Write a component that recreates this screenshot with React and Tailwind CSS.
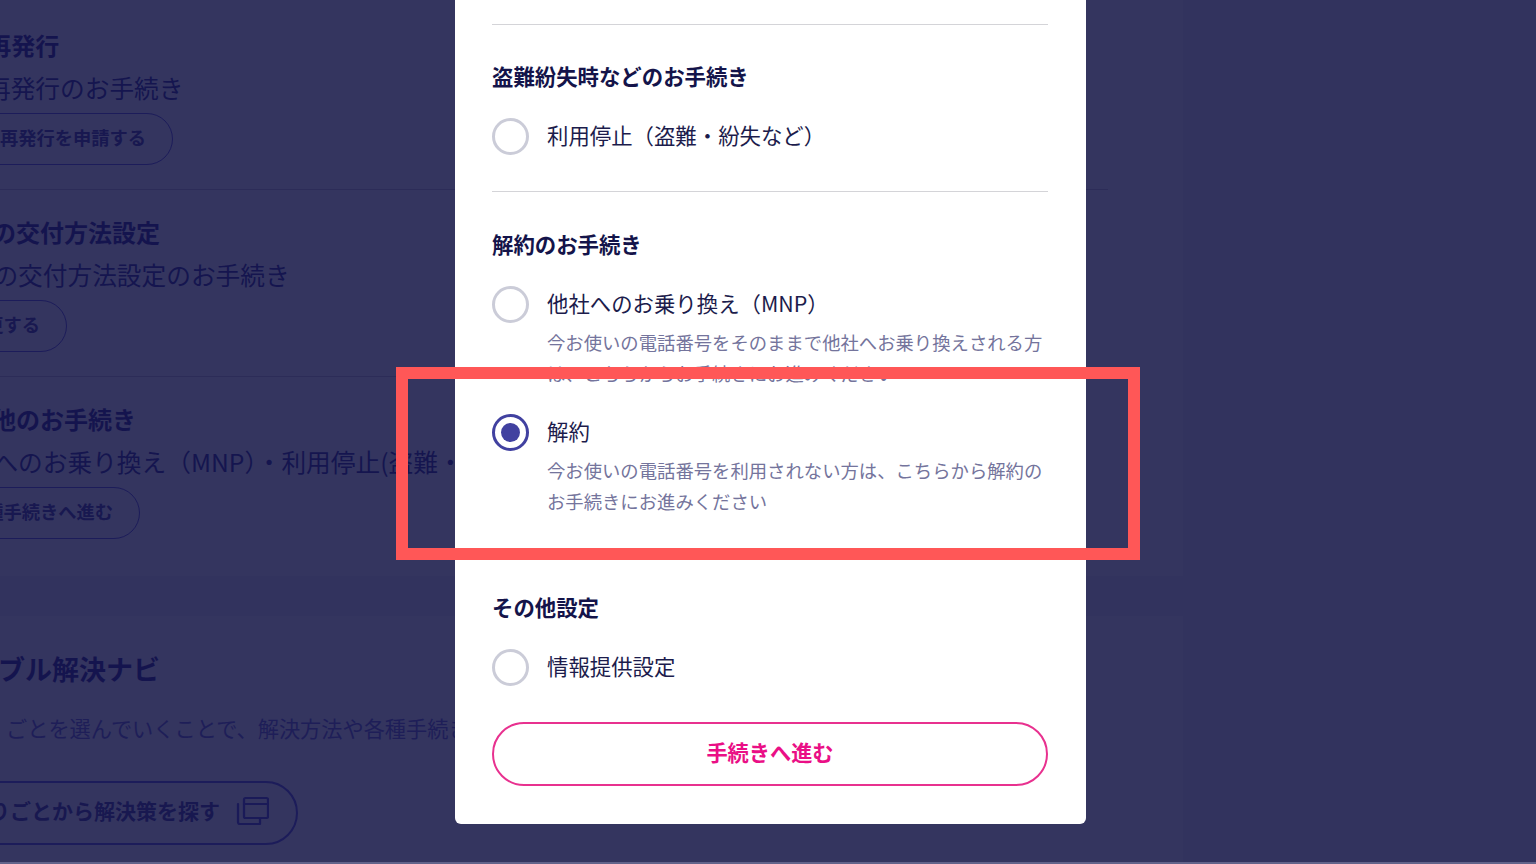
import React from "react";

const FONT = { fontFamily: '"Noto Sans CJK JP", "Noto Sans", sans-serif' };

const settings = [
  {
    title: "SIM再発行",
    text: "SIM再発行のお手続き",
    action: "SIM再発行を申請する",
  },
  {
    title: "書面の交付方法設定",
    text: "書面の交付方法設定のお手続き",
    action: "変更する",
  },
  {
    title: "その他のお手続き",
    text: "他社へのお乗り換え（MNP）・利用停止(盗難・紛失など)・解約のお手続き",
    action: "各種手続きへ進む",
  },
];

const WindowsIcon = () => (
  <svg width="33" height="30" viewBox="0 0 33 30" fill="none" stroke="#1a1a58" strokeWidth="2.2" strokeLinejoin="round" strokeLinecap="round">
    <rect x="8" y="2" width="24" height="20" rx="1.5" />
    <path d="M8 8h24" />
    <path d="M2 8v18a2 2 0 0 0 2 2h20v-5" />
  </svg>
);

const SettingRow = ({ item, last }) => (
  <div className={last ? "pt-[24px] pb-[37px]" : "pt-[24px] pb-[24px] border-b border-[#2c2c58]"}>
    <h3 className="text-[24px] leading-[36px] font-bold text-[#14144e] whitespace-nowrap">{item.title}</h3>
    <p className="mt-[6px] text-[24.7px] leading-[36px] text-[#15154f] whitespace-nowrap">{item.text}</p>
    <button className="mt-[8px] flex h-[52px] items-center rounded-full border border-[#1c1c5a] pl-[22px] pr-[26px] pb-[2px] text-[18.25px] font-bold text-[#181850] whitespace-nowrap">
      {item.action}
    </button>
  </div>
);

const Radio = ({ checked }) => (
  <span
    className={`flex h-[37px] w-[37px] shrink-0 items-center justify-center rounded-full border-[3px] bg-white ${
      checked ? "border-[#4141a0]" : "border-[#cbccd8]"
    }`}
  >
    {checked && <span className="h-[19px] w-[19px] rounded-full bg-[#4141a0]" />}
  </span>
);

const Option = ({ label, desc, checked }) => (
  <div className="flex gap-[18px]">
    <Radio checked={checked} />
    <div className="min-w-0">
      <div className="text-[21.4px] leading-[33px] text-[#1c1c4c]">{label}</div>
      {desc && <p className="mt-[8px] text-[18.35px] leading-[31px] text-[#74749c]">{desc}</p>}
    </div>
  </div>
);

const SectionTitle = ({ children, className }) => (
  <h4 className={`text-[21.4px] leading-[30px] font-bold text-[#14144a] ${className}`}>{children}</h4>
);

export default function App() {
  return (
    <div style={FONT} className="relative h-screen w-screen overflow-hidden bg-[#32335e] border-b-2 border-[#62638a]">
      {/* dimmed page behind the dialog */}
      <main className="-ml-[131px] w-[1314px]">
        <section className="bg-[#34355f] px-[75px] pt-[3px]">
          {settings.map((item, i) => (
            <SettingRow key={item.title} item={item} last={i === settings.length - 1} />
          ))}
        </section>
        <section className="mt-[40px] h-[300px] bg-[#34355f] px-[75px] pt-[33px]">
          <h3 className="text-[27px] leading-[40px] font-bold text-[#14144e] whitespace-nowrap">トラブル解決ナビ</h3>
          <p className="mt-[21px] ml-[62px] text-[21.2px] leading-[36px] text-[#1e1e58] whitespace-nowrap">
            ごとを選んでいくことで、解決方法や各種手続きをご案内します
          </p>
          <button className="mt-[35px] flex h-[64px] items-center gap-[16px] rounded-full border-2 border-[#1c1c5a] pl-[22px] pr-[27px] pb-[4px] text-[21px] font-bold text-[#181850] whitespace-nowrap">
            困りごとから解決策を探す
            <WindowsIcon />
          </button>
        </section>
      </main>

      {/* dialog */}
      <div className="absolute left-[455px] top-0 h-[824px] w-[631px] rounded-b-md bg-white pl-[37px] pr-[38px] pt-6">
        <div className="border-t border-[#d4d4d8]" />
        <SectionTitle className="mt-[36px]">盗難紛失時などのお手続き</SectionTitle>
        <div className="mt-[27px]">
          <Option label="利用停止（盗難・紛失など）" />
        </div>
        <div className="mt-[36px] border-t border-[#d4d4d8]" />
        <SectionTitle className="mt-[37px]">解約のお手続き</SectionTitle>
        <div className="mt-[27px]">
          <Option
            label="他社へのお乗り換え（MNP）"
            desc="今お使いの電話番号をそのままで他社へお乗り換えされる方は、こちらからお手続きにお進みください"
          />
        </div>
        <div className="mt-[25px]">
          <Option
            checked
            label="解約"
            desc="今お使いの電話番号を利用されない方は、こちらから解約のお手続きにお進みください"
          />
        </div>
        <SectionTitle className="mt-[75px]">その他設定</SectionTitle>
        <div className="mt-[27px]">
          <Option label="情報提供設定" />
        </div>
        <button className="mt-[36px] h-[64px] w-full rounded-full border-2 border-[#e8318f] pb-[4px] text-[21.2px] font-bold text-[#ea0f86]">
          手続きへ進む
        </button>
      </div>

      {/* highlight frame */}
      <div className="absolute left-[396px] top-[367px] h-[193px] w-[744px] border-[12px] border-[#ff5757]" />
    </div>
  );
}
